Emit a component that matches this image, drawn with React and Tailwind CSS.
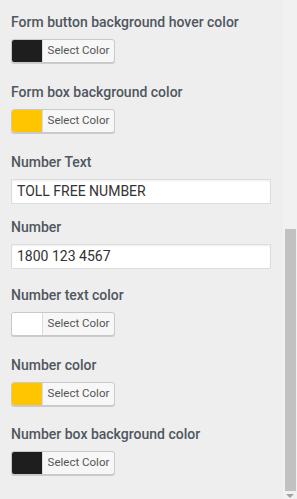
import React from "react";

function Label({ children }) {
  return (
    <div className="text-[14px] font-medium leading-[20px] text-[#50575e]">{children}</div>
  );
}

function ColorButton({ color }) {
  return (
    <div className="mt-[7px] flex h-[24px] w-[104px] overflow-hidden rounded-[3px] border border-[#c9c9c9] bg-[#f7f7f7] shadow-[0_1px_0_#ccc]">
      <div className="w-[31px] border-r border-[#dcdcdc]" style={{ backgroundColor: color }} />
      <div className="flex flex-1 items-center justify-center text-[11.5px] text-[#555]">Select Color</div>
    </div>
  );
}

function TextInput({ value }) {
  return (
    <div className="mt-[7px] flex h-[25px] w-[260px] items-center border border-[#dddddd] bg-white px-[5px] text-[14px] text-[#333] shadow-[inset_0_1px_2px_rgba(0,0,0,0.07)]">
      {value}
    </div>
  );
}

export default function App() {
  return (
    <div className="flex h-[499px] w-[297px] overflow-hidden bg-[#eeeeee]" style={{ fontFamily: "Roboto, 'Noto Sans', sans-serif" }}>
      <div className="flex-1 pl-[11px] pt-[12px]">
        <Label>Form button background hover color</Label>
        <ColorButton color="#1e1e1e" />
        <div className="mt-[19px]">
          <Label>Form box background color</Label>
          <ColorButton color="#ffc600" />
        </div>
        <div className="mt-[19px]">
          <Label>Number Text</Label>
          <TextInput value="TOLL FREE NUMBER" />
        </div>
        <div className="mt-[13px]">
          <Label>Number</Label>
          <TextInput value="1800 123 4567" />
        </div>
        <div className="mt-[16px]">
          <Label>Number text color</Label>
          <ColorButton color="#ffffff" />
        </div>
        <div className="mt-[19px]">
          <Label>Number color</Label>
          <ColorButton color="#ffc600" />
        </div>
        <div className="mt-[18px]">
          <Label>Number box background color</Label>
          <ColorButton color="#1e1e1e" />
        </div>
      </div>
      <div className="flex w-[14px] flex-col items-center bg-[#f1f1f1]">
        <div className="h-[229px]" />
        <div className="h-[262px] w-[11px] bg-[#c1c1c1]" />
        <div className="mt-[3px] h-0 w-0 border-x-[4px] border-t-[4px] border-x-transparent border-t-[#a3a3a3]" />
      </div>
    </div>
  );
}
